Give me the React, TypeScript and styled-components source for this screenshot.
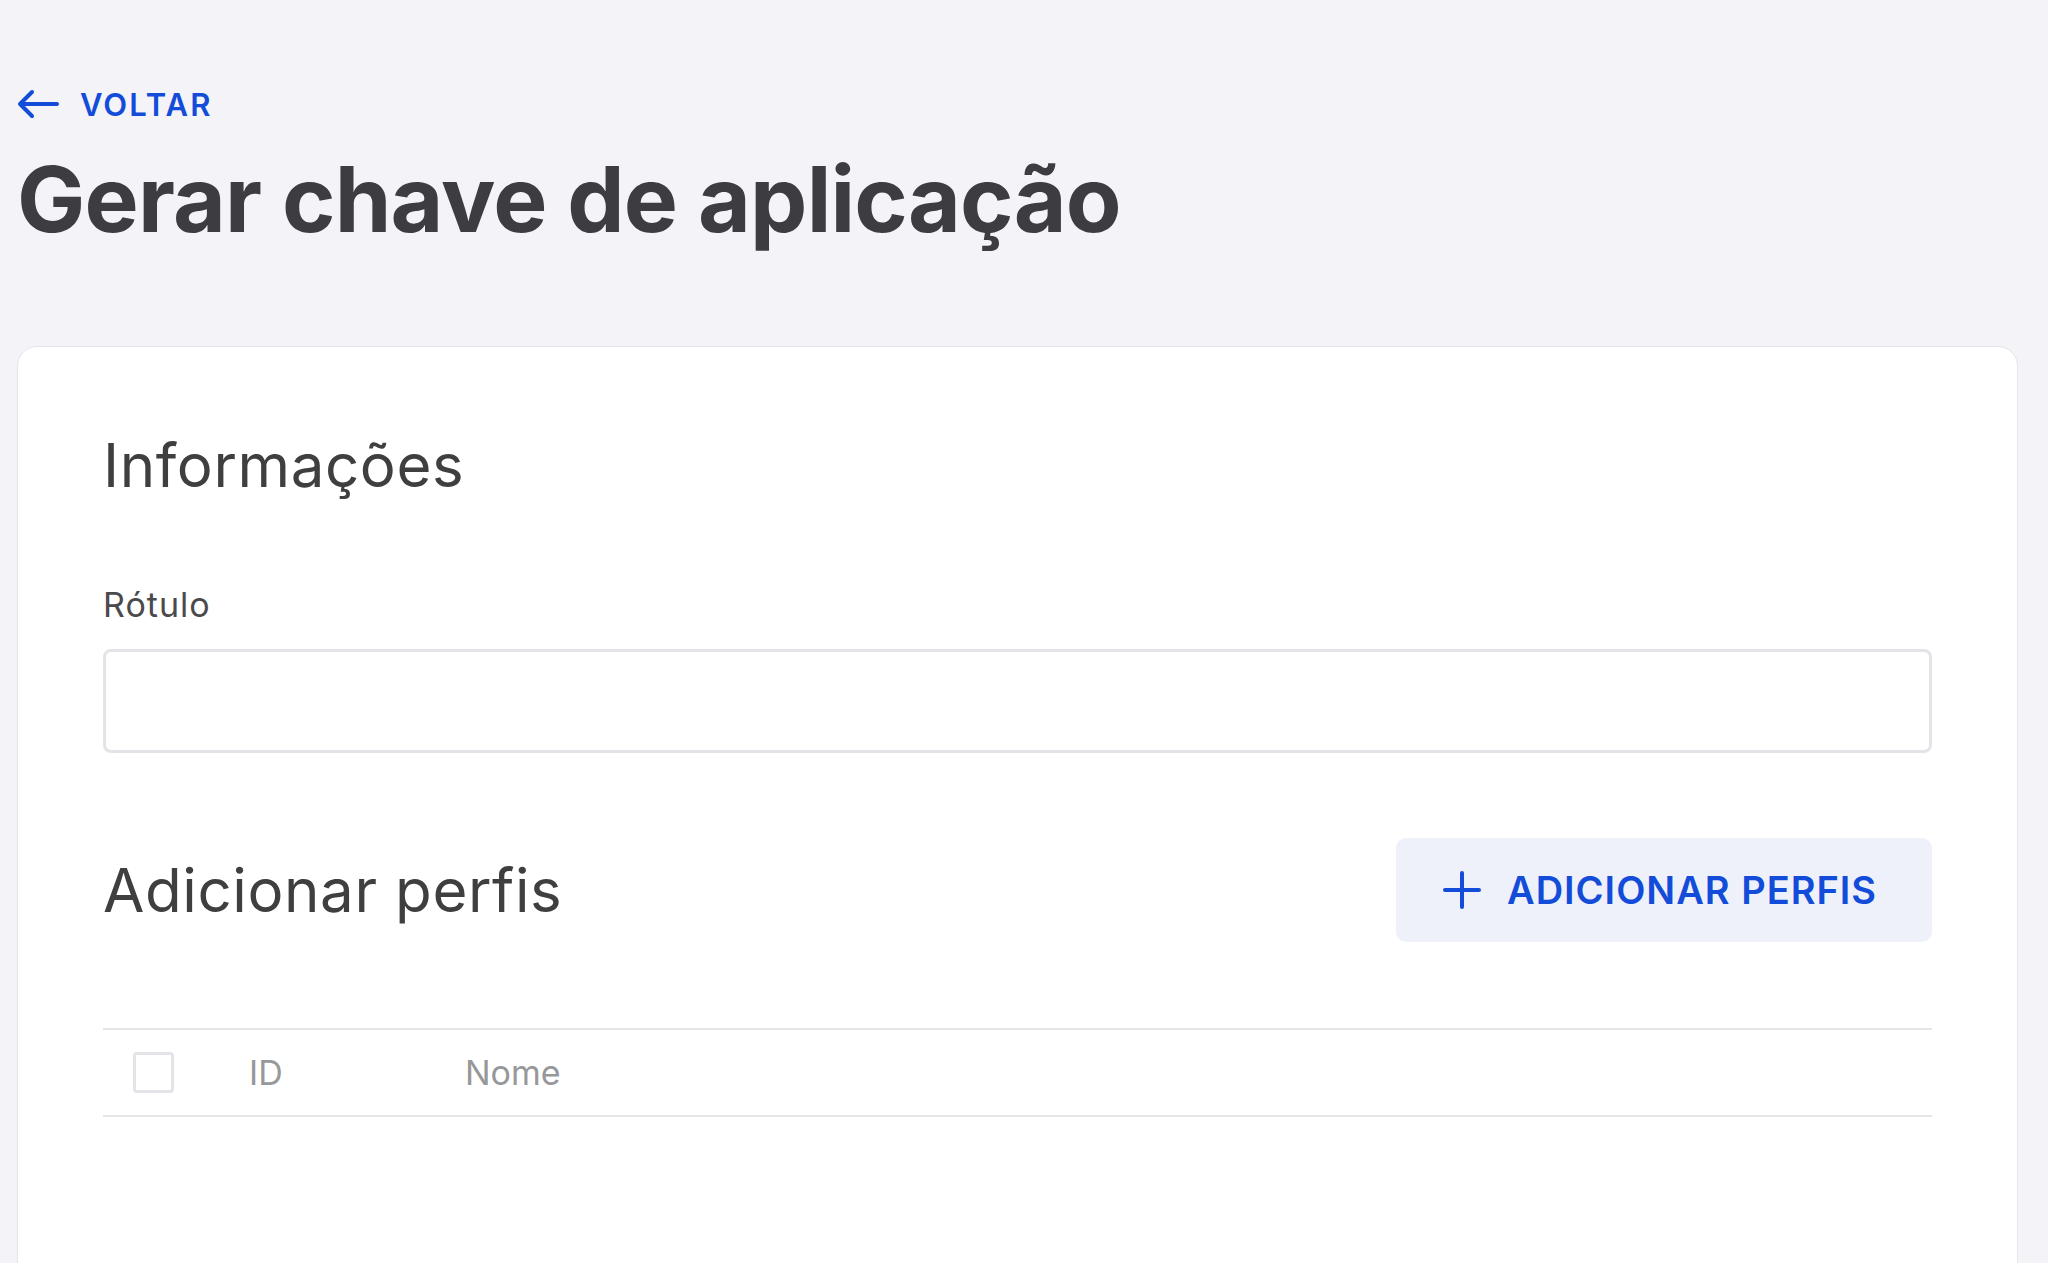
import styled, { createGlobalStyle } from 'styled-components'

const GlobalStyle = createGlobalStyle`
  html, body {
    margin: 0;
    padding: 0;
    background: #f4f4f8;
    font-family: Inter, "Noto Sans", sans-serif;
    color: #3f3f40;
  }
`

const Page = styled.div`
  padding: 84px 30px 0 17px;
  min-height: 1263px;
  box-sizing: border-box;
  overflow: hidden;
`

const BackLink = styled.a`
  display: flex;
  align-items: center;
  gap: 21px;
  height: 40px;
  color: #134cd8;
  font-size: 31px;
  font-weight: 600;
  letter-spacing: 2px;
  text-decoration: none;
  cursor: pointer;
`

const Title = styled.h1`
  margin: 30px 0 0;
  font-size: 91px;
  line-height: 91px;
  font-weight: 700;
  letter-spacing: -0.8px;
  color: #3d3d41;
`

const Card = styled.section`
  margin-top: 101px;
  background: #fff;
  border: 1px solid #e4e4ea;
  border-radius: 20px;
  padding: 82px 85px 200px;
`

const SectionTitle = styled.h2`
  margin: 0;
  font-size: 60px;
  line-height: 72px;
  font-weight: 400;
  letter-spacing: 0.6px;
  color: #3f3f40;
`

const Label = styled.label`
  display: block;
  margin-top: 84px;
  font-size: 34px;
  line-height: 40px;
  letter-spacing: 1px;
  color: #4a4a4c;
`

const Input = styled.input`
  display: block;
  box-sizing: border-box;
  width: 100%;
  height: 104px;
  margin-top: 24px;
  border: 3px solid #e3e4e8;
  border-radius: 8px;
  background: #fff;
  outline: none;
`

const SectionHeader = styled.div`
  display: flex;
  align-items: center;
  justify-content: space-between;
  margin-top: 85px;
`

const SecondaryButton = styled.button`
  display: flex;
  align-items: center;
  gap: 26px;
  height: 104px;
  width: 536px;
  padding: 0 0 0 47px;
  box-sizing: border-box;
  border: none;
  border-radius: 10px;
  background: #eef1fa;
  color: #134cd8;
  font-family: Inter, sans-serif;
  font-size: 38px;
  font-weight: 600;
  letter-spacing: 1px;
  cursor: pointer;
`

const Table = styled.div`
  margin-top: 86px;
  border-top: 2px solid #e6e6ea;
  border-bottom: 2px solid #e6e6ea;
`

const HeaderRow = styled.div`
  display: grid;
  grid-template-columns: 116px 216px 1fr;
  align-items: center;
  height: 85px;
  padding-left: 30px;
`

const Checkbox = styled.span`
  display: block;
  width: 41px;
  height: 41px;
  box-sizing: border-box;
  border: 3px solid #e3e4e8;
  border-radius: 4px;
  background: #fff;
`

const HeaderCell = styled.span`
  font-size: 34px;
  color: #979899;
`

function ArrowLeft() {
  return (
    <svg width="42" height="30" viewBox="0 0 42 30" fill="none">
      <path d="M40 15H3M15 3L3 15l12 12" stroke="currentColor" strokeWidth="4" strokeLinecap="round" strokeLinejoin="round" />
    </svg>
  )
}

function Plus() {
  return (
    <svg width="38" height="38" viewBox="0 0 38 38" fill="none">
      <path d="M19 2v34M2 19h34" stroke="currentColor" strokeWidth="4" strokeLinecap="round" />
    </svg>
  )
}

export default function App() {
  return (
    <>
      <GlobalStyle />
      <Page>
        <BackLink>
          <ArrowLeft />
          VOLTAR
        </BackLink>
        <Title>Gerar chave de aplicação</Title>
        <Card>
          <SectionTitle>Informações</SectionTitle>
          <Label>Rótulo</Label>
          <Input />
          <SectionHeader>
            <SectionTitle>Adicionar perfis</SectionTitle>
            <SecondaryButton>
              <Plus />
              ADICIONAR PERFIS
            </SecondaryButton>
          </SectionHeader>
          <Table>
            <HeaderRow>
              <Checkbox />
              <HeaderCell>ID</HeaderCell>
              <HeaderCell>Nome</HeaderCell>
            </HeaderRow>
          </Table>
        </Card>
      </Page>
    </>
  )
}
